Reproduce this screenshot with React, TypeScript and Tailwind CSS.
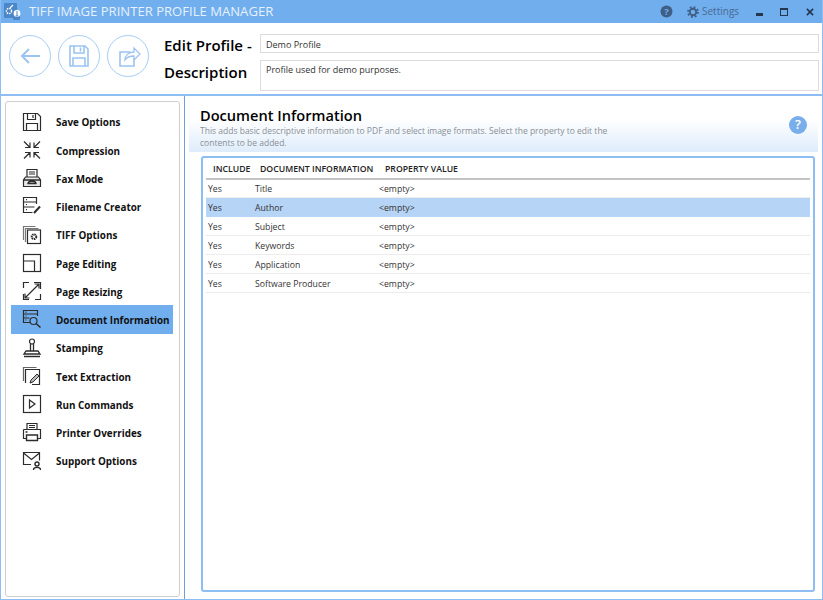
import type { ReactNode } from 'react';

const font = "font-['Open_Sans','Noto_Sans',sans-serif]";

const Ic = ({ children }: { children: ReactNode }) => (
  <svg width="20" height="20" viewBox="0 0 20 20" fill="none" stroke="#2c2c2c" strokeWidth="1.2" className="shrink-0">
    {children}
  </svg>
);

const menu: { label: string; icon: ReactNode; active?: boolean }[] = [
  {
    label: 'Save Options',
    icon: (
      <Ic>
        <path d="M1.5 1.500h14l3 3v14h-17z" />
        <path d="M5.500 1.500v6h8v-6M11 3v3M4.500 18.500v-7h11v7" />
      </Ic>
    ),
  },
  {
    label: 'Compression',
    icon: (
      <Ic>
        <path d="M2 1.500l6 6M3 7.500h5v-5M18 1.500l-6 6M17 7.500h-5v-5M2 18.500l6-6M3 12.500h5v5M18 18.500l-6-6M17 12.500h-5v5" />
      </Ic>
    ),
  },
  {
    label: 'Fax Mode',
    icon: (
      <Ic>
        <path d="M5 9V1.500h10V9M7 4h6M7 6h6" />
        <path d="M3.500 9h13l2 3v6.500h-17V12z" fill="#e8e8e8" />
        <path d="M6 15.500c0-3 8-3 8 0zM1.500 12h17" strokeWidth="1.4" />
      </Ic>
    ),
  },
  {
    label: 'Filename Creator',
    icon: (
      <Ic>
        <path d="M14.500 8V1.500h-13v15h9M1.500 6h13M1.500 11h11M4 3.700h1M4 8.500h1M4 13.700h1" />
        <path d="M12 17l6-6.500" strokeWidth="2" />
      </Ic>
    ),
  },
  {
    label: 'TIFF Options',
    icon: (
      <Ic>
        <path d="M1.500 15V1.500h12M3.500 17V3.500h13" stroke="#777" />
        <rect x="5.500" y="5" width="13" height="13.500" />
        <circle cx="12" cy="11.700" r="2.300" strokeWidth="2" strokeDasharray="1.4 .6" />
      </Ic>
    ),
  },
  {
    label: 'Page Editing',
    icon: (
      <Ic>
        <rect x="1.500" y="1.500" width="17" height="17" />
        <path d="M1.500 8h11v10.500" />
      </Ic>
    ),
  },
  {
    label: 'Page Resizing',
    icon: (
      <Ic>
        <path d="M7 1.500H1.500V7M1.500 13v5.500H7M13 18.500h5.500V13M12 1.500h6.500V8" />
        <path d="M3 17L17 3M3 12.500V17h4.500M12.500 3H17v4.500" />
      </Ic>
    ),
  },
  {
    label: 'Document Information',
    active: true,
    icon: (
      <Ic>
        <path d="M8 13.500H1.500V1.500h14V7M1.500 5h14M1.500 9h6M3.500 3.200h1M3.500 7h1M3.500 11h1" />
        <circle cx="11.500" cy="12" r="3.500" />
        <path d="M14 14.500l4.500 4" strokeWidth="1.5" />
      </Ic>
    ),
  },
  {
    label: 'Stamping',
    icon: (
      <Ic>
        <circle cx="10" cy="3.500" r="2.500" />
        <path d="M8.500 6v7M11.500 6v7M4 13h12l2 3H2zM2 18.500h16" strokeWidth="1.3" />
      </Ic>
    ),
  },
  {
    label: 'Text Extraction',
    icon: (
      <Ic>
        <path d="M1.500 15V1.500h13" stroke="#666" />
        <path d="M3.500 17V3.500h14v15H10" />
        <path d="M8 17l1-3 6-6 2 2-6 6z" fill="#bbb" strokeWidth="1" />
      </Ic>
    ),
  },
  {
    label: 'Run Commands',
    icon: (
      <Ic>
        <rect x="1.500" y="1.500" width="17" height="17" />
        <path d="M7.500 6l5.500 4-5.500 4z" />
      </Ic>
    ),
  },
  {
    label: 'Printer Overrides',
    icon: (
      <Ic>
        <path d="M5 7V1.500h10V7M7 3.500h6M7 5.500h6" />
        <path d="M1.500 7.500h17v9h-3M4.500 16.500h-3v-9" />
        <path d="M4.500 13h11v5.500h-11zM3.500 10h2" strokeWidth="1.4" />
      </Ic>
    ),
  },
  {
    label: 'Support Options',
    icon: (
      <Ic>
        <path d="M9 13.500H1.500v-12h16v8M1.500 2l8 6.500 8-6.500" />
        <circle cx="15" cy="13" r="2" strokeWidth="1.4" />
        <path d="M11.500 19c0-3.500 7-3.500 7 0" strokeWidth="1.4" />
      </Ic>
    ),
  },
];

const rows = ['Title', 'Author', 'Subject', 'Keywords', 'Application', 'Software Producer'];

const RoundBtn = ({ children }: { children: ReactNode }) => (
  <div className="w-[42px] h-[42px] rounded-full border-[1.5px] border-[#a9cdf5] flex items-center justify-center shrink-0">
    <svg width="26" height="26" viewBox="0 0 26 26" fill="none" stroke="#9cc3f1" strokeWidth="1.6">
      {children}
    </svg>
  </div>
);

export default function App() {
  return (
    <div className={`${font} w-[823px] h-[600px] bg-white flex flex-col overflow-hidden border-x border-b border-[#8dbdf2]`}>
      {/* title bar */}
      <div className="-mx-px h-[23px] bg-[#70aeee] flex items-center shrink-0">
        <svg width="17" height="18" viewBox="0 0 17 18" className="ml-[4px] shrink-0">
          <rect x="0" y="0" width="13" height="15" rx="1" fill="#4a86c8" />
          <rect x="9" y="11" width="7" height="6" rx="1" fill="#4a86c8" />
          <circle cx="5" cy="8" r="2.600" fill="none" stroke="#fff" strokeWidth="1.4" strokeDasharray="1.6 .8" />
          <path d="M6 5l3-3" stroke="#fff" strokeWidth="1.2" />
          <circle cx="13" cy="10.500" r="3.400" fill="#fff" />
          <path d="M13 8v5M11.500 13h3" stroke="#4a86c8" />
        </svg>
        <span className="ml-[8px] text-[13.100px] text-[#e6f1fd] whitespace-nowrap">TIFF IMAGE PRINTER PROFILE MANAGER</span>
        <div className="ml-auto flex items-center">
          <svg width="13" height="13" viewBox="0 0 13 13">
            <circle cx="6.500" cy="6.500" r="6" fill="#3f5f86" />
            <text x="6.500" y="10" textAnchor="middle" fontSize="9.500" fontWeight="700" fill="#70aeee">?</text>
          </svg>
          <svg width="12" height="12" viewBox="0 0 13 13" className="ml-[14px]">
            <circle cx="6.500" cy="6.500" r="3.500" fill="none" stroke="#3f5f86" strokeWidth="2" />
            <circle cx="6.500" cy="6.500" r="5.400" fill="none" stroke="#3f5f86" strokeWidth="2" strokeDasharray="2 2.240" />
          </svg>
          <span className="ml-[3px] w-[37px] text-[10px] text-[#4a6a92] whitespace-nowrap">Settings</span>
          <div className="ml-[17px] w-[7px] h-[3px] mt-[5px] bg-[#25374f]" />
          <div className="ml-[17px] w-[8px] h-[8px] border border-t-2 border-[#25374f]" />
          <svg width="8" height="8" viewBox="0 0 9 9" className="ml-[18px] mr-[9px]">
            <path d="M1 1l7 7M8 1L1 8" stroke="#25374f" strokeWidth="1.800" />
          </svg>
        </div>
      </div>

      {/* header */}
      <div className="h-[73px] shrink-0 flex border-b-2 border-[#8dbdf2] pl-[8px] pr-[3px]">
        <div className="flex gap-[7px] pt-[12px]">
          <RoundBtn>
            <path d="M23 13H5M12 6l-7 7 7 7" strokeWidth="2" />
          </RoundBtn>
          <RoundBtn>
            <path d="M4 3h15l3 3v17H4z" />
            <path d="M8 3v7h10V3M14.500 4.500v4M7 23v-8h12v8" />
          </RoundBtn>
          <RoundBtn>
            <path d="M15 9H5v14h14v-7" />
            <path d="M10 17c0-5 4-8 9-8V5l6 6-6 6v-4c-4 0-7 1-9 4z" strokeWidth="1.300" />
          </RoundBtn>
        </div>
        <div className="ml-[15px] w-[96px] shrink-0 text-[15px] font-semibold text-black whitespace-nowrap">
          <div className="mt-[11px] h-[28px] leading-[22px]">Edit Profile -</div>
          <div className="leading-[20px]">Description</div>
        </div>
        <div className="flex-1 pt-[11px] flex flex-col gap-[7px]">
          <div className="h-[19px] border border-[#dcdcdc] px-[5px] text-[9px] leading-[19px] text-[#333]">Demo Profile</div>
          <div className="h-[31px] border border-[#dcdcdc] px-[5px] text-[9px] leading-[18px] text-[#333]">Profile used for demo purposes.</div>
        </div>
      </div>

      <div className="flex-1 flex min-h-0">
        {/* sidebar */}
        <div className="w-[184px] shrink-0 border-r border-[#6f9fd6] pl-[4px] pr-[4px] pt-[5px] pb-[2px]">
          <div className="h-full border border-[#cfcfcf] rounded-[3px] pt-[5.500px] pl-[5px] pr-[6px]">
            {menu.map((m) => (
              <div
                key={m.label}
                className={`h-[28.250px] flex items-center pl-[11px] ${m.active ? 'bg-[#70aeee]' : ''}`}
              >
                {m.icon}
                <span className="ml-[14px] pt-[2.500px] text-[9.900px] font-bold text-[#111] whitespace-nowrap">{m.label}</span>
              </div>
            ))}
          </div>
        </div>

        {/* main */}
        <div className="flex-1 min-w-0 flex flex-col">
          <div className="h-[55px] mt-[1px] mx-[4px] shrink-0 bg-gradient-to-b from-white from-40% to-[#deecfb] pl-[11px] relative">
            <div className="text-[14.600px] font-semibold text-black leading-[20px] pt-[8px] box-content">Document Information</div>
            <div className="text-[8.500px] leading-[12px] text-[#8a8f96] w-[412px]">
              This adds basic descriptive information to PDF and select image formats. Select the property to edit the contents to be added.
            </div>
            <div className="absolute right-[11px] top-[19px] w-[18px] h-[18px] rounded-full bg-[#78aeea] flex items-center justify-center text-white text-[13px] font-semibold">?</div>
          </div>
          <div className="h-[436px] mt-[4px] ml-[16px] mr-[7px] border-2 border-[#8dbdf2] rounded-[3px] pl-[3px] pr-[3px] pt-[2px]">
            <div className="h-[20px] pt-[1px] border-b-2 border-[#c4c4c4] flex items-center text-[8.700px] font-semibold text-[#222] pl-[7px]">
              <span className="w-[47px]">INCLUDE</span>
              <span className="w-[125px]">DOCUMENT INFORMATION</span>
              <span>PROPERTY VALUE</span>
            </div>
            <div className="-mt-px">
              {rows.map((r, i) => (
                <div
                  key={r}
                  className={`h-[19px] pt-[4px] flex items-center text-[8.700px] text-[#333] pl-[2px] border-b ${i === 1 ? 'bg-[#b6d4f5] border-[#b6d4f5]' : 'border-[#ececec]'}`}
                >
                  <span className="w-[47px]">Yes</span>
                  <span className="w-[124px]">{r}</span>
                  <span>{'<empty>'}</span>
                </div>
              ))}
            </div>
          </div>
        </div>
      </div>
    </div>
  );
}
